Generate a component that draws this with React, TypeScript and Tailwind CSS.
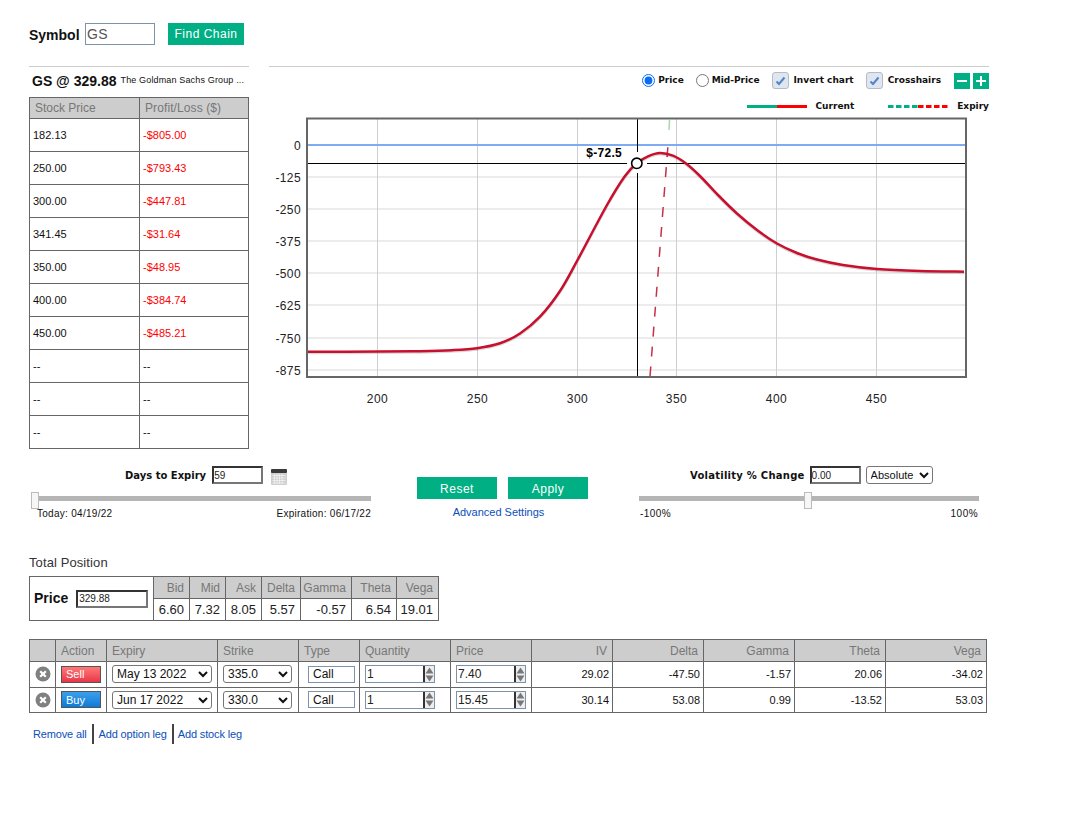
import React from 'react';

const plRows = [
  ['182.13', '-$805.00'],
  ['250.00', '-$793.43'],
  ['300.00', '-$447.81'],
  ['341.45', '-$31.64'],
  ['350.00', '-$48.95'],
  ['400.00', '-$384.74'],
  ['450.00', '-$485.21'],
  ['--', '--'],
  ['--', '--'],
  ['--', '--'],
];

const totals = [
  ['Bid', '6.60'],
  ['Mid', '7.32'],
  ['Ask', '8.05'],
  ['Delta', '5.57'],
  ['Gamma', '-0.57'],
  ['Theta', '6.54'],
  ['Vega', '19.01'],
];

const legs = [
  { action: 'Sell', expiry: 'May 13 2022', strike: '335.0', price: '7.40', iv: '29.02', delta: '-47.50', gamma: '-1.57', theta: '20.06', vega: '-34.02' },
  { action: 'Buy', expiry: 'Jun 17 2022', strike: '330.0', price: '15.45', iv: '30.14', delta: '53.08', gamma: '0.99', theta: '-13.52', vega: '53.03' },
];

const curve: [number, number][] = [
  [308, 351.7], [380, 351.6], [420, 351.2], [452, 350.2], [477, 348.2], [500, 343.3], [520, 333.5], [540, 316.7], [560, 291], [577, 261],
  [607, 205], [625, 176], [637, 163], [648, 156.3], [660, 153], [673, 155.7], [686, 163.5], [700, 176], [718, 195], [737, 213.5], [757, 230], [777, 243.5], [797, 253],
  [817, 259.5], [843, 265], [877, 269], [920, 271], [964, 271.7],
];

// catmull-rom -> bezier
function smoothPath(pts: [number, number][]) {
  let d = `M${pts[0][0]} ${pts[0][1]}`;
  for (let i = 0; i < pts.length - 1; i++) {
    const p0 = pts[Math.max(i - 1, 0)];
    const p1 = pts[i];
    const p2 = pts[i + 1];
    const p3 = pts[Math.min(i + 2, pts.length - 1)];
    const c1x = p1[0] + (p2[0] - p0[0]) / 6;
    const c1y = p1[1] + (p2[1] - p0[1]) / 6;
    const c2x = p2[0] - (p3[0] - p1[0]) / 6;
    const c2y = p2[1] - (p3[1] - p1[1]) / 6;
    d += ` C${c1x} ${c1y} ${c2x} ${c2y} ${p2[0]} ${p2[1]}`;
  }
  return d;
}

function Chart() {
  const yTicks = [
    ['0', 145], ['-125', 177], ['-250', 209], ['-375', 241], ['-500', 273], ['-625', 305], ['-750', 338], ['-875', 370],
  ] as const;
  const xTicks = [['200', 377.5], ['250', 477.5], ['300', 577.5], ['350', 676.5], ['400', 776.5], ['450', 876.5]] as const;
  const path = smoothPath(curve);

  return (
    <svg width="720" height="300" viewBox="269 112 720 300" className="block">
      {yTicks.slice(1).map(([, y]) => (
        <line key={y} x1="308" x2="965" y1={y} y2={y} stroke="#ececec" strokeWidth="2" />
      ))}
      {xTicks.map(([, x]) => (
        <line key={x} x1={x} x2={x} y1="119" y2="377" stroke="#cfcfcf" strokeWidth="1" />
      ))}
      <line x1="308" x2="965" y1="145" y2="145" stroke="#7fabf2" strokeWidth="2" />
      <line x1="308" x2="627" y1="163.5" y2="163.5" stroke="#000" />
      <line x1="647" x2="966" y1="163.5" y2="163.5" stroke="#000" />
      <line x1="637.5" x2="637.5" y1="119" y2="152" stroke="#000" />
      <line x1="637.5" x2="637.5" y1="173" y2="377" stroke="#000" />
      <line x1="669.5" x2="669" y1="120" y2="130" stroke="#a8d8a8" strokeWidth="1.5" />
      <line x1="650" x2="668" y1="376.5" y2="145" stroke="#c5304a" strokeWidth="1.5" strokeDasharray="10 10" />
      <path d={path} fill="none" stroke="#000" strokeOpacity="0.15" strokeWidth="3" transform="translate(0 1)" />
      <path d={path} fill="none" stroke="#c8102e" strokeWidth="2.5" />
      <circle cx="636.8" cy="163.3" r="5.2" fill="#fff" stroke="#000" strokeWidth="1.6" />
      <rect x="307" y="118.5" width="659" height="258.5" fill="none" stroke="#666" strokeWidth="2" />
      <text x="622" y="157" textAnchor="end" fontSize="12" fontWeight="700" fill="#000" letterSpacing="0.3">$-72.5</text>
      {yTicks.map(([label, y]) => (
        <text key={label} x="301" y={y + 4.5} textAnchor="end" fontSize="12" fill="#222" letterSpacing="0.4">{label}</text>
      ))}
      {xTicks.map(([label, x]) => (
        <text key={label} x={x} y="403" textAnchor="middle" fontSize="12" fill="#222" letterSpacing="0.5">{label}</text>
      ))}
    </svg>
  );
}

function CheckBox() {
  return (
    <span className="flex h-[17px] w-[17px] items-center justify-center rounded-[3px] border border-[#b4bcc8] bg-[#dfe6ef]">
      <svg width="11" height="10" viewBox="0 0 11 10">
        <path d="M1.5 5.5 L4 8 L9.5 1.5" fill="none" stroke="#4f86c6" strokeWidth="2" />
      </svg>
    </span>
  );
}

function Spinner() {
  return (
    <span className="flex h-full w-[11px] shrink-0 flex-col items-center justify-center gap-[1px] border-l-2 border-[#333] bg-[#eee]">
      <svg width="9" height="7" viewBox="0 0 9 7"><path d="M4.5 0.5 L8.5 6.5 H0.5 Z" fill="#777" /></svg>
      <svg width="9" height="7" viewBox="0 0 9 7"><path d="M4.5 6.5 L8.5 0.5 H0.5 Z" fill="#777" /></svg>
    </span>
  );
}

function NumberBox({ value }: { value: string }) {
  return (
    <div className="flex h-[18px] w-[70px] border border-[#7b93ab] bg-white">
      <input defaultValue={value} className="w-0 min-w-0 flex-1 pl-[1px] text-[12px] text-[#222] outline-none" />
      <Spinner />
    </div>
  );
}

function Slider({ handleClass }: { handleClass: string }) {
  return (
    <div className="relative flex h-[17px] items-start pt-[4px]">
      <div className="h-[5px] flex-1 bg-[#b5b5b5]" />
      <div className={`absolute top-0 h-[17px] w-[8px] border border-[#bbb] bg-[#f6f6f6] ${handleClass}`} />
    </div>
  );
}

function Calendar() {
  return (
    <svg width="16" height="16" viewBox="0 0 16 16" className="ml-[8px] mt-[4px]">
      <rect x="0" y="0" width="16" height="16" rx="1" fill="#cfcfcf" />
      <rect x="0" y="0" width="16" height="4" rx="1" fill="#3a3a3a" />
      <path d="M1.5 6.5H14.5M1.5 9H14.5M1.5 11.5H14.5M1.5 14H14.5M3.5 5V15M6 5V15M8.5 5V15M11 5V15" stroke="#f5f5f5" strokeWidth="0.7" />
    </svg>
  );
}

function RemoveIcon() {
  return (
    <svg width="16" height="16" viewBox="0 0 16 16" className="mx-auto block">
      <circle cx="8" cy="8" r="7.5" fill="#808080" />
      <path d="M5.2 5.2 L10.8 10.8 M10.8 5.2 L5.2 10.8" stroke="#fff" strokeWidth="2.2" />
    </svg>
  );
}

const labelClass = "font-['DejaVu_Sans',sans-serif] text-[10px] font-bold text-[#111]";
const topLabelClass = "font-['DejaVu_Sans',sans-serif] text-[9px] font-bold text-[#111]";
const insetInput = 'h-[18px] w-[51px] border-2 border-t-[#333] border-l-[#333] border-r-[#767676] border-b-[#767676] text-[10px] text-[#222] outline-none';
const selectClass = 'h-[18px] rounded-[3px] border border-[#767676] bg-white text-[#111] outline-none';
const th = 'border border-[#666] bg-[#cdcdcd] font-normal text-[#777]';

export default function App() {
  return (
    <div className="min-h-[817px] w-[1068px] bg-white pl-[29px] pt-[23px] font-['Liberation_Sans',Arial,sans-serif] text-[#111]">
      {/* Symbol */}
      <div className="flex h-[22px] items-center">
        <span className="w-[56px] pt-[2px] text-[14px] font-bold">Symbol</span>
        <input defaultValue="GS" className="h-[22px] w-[70px] border border-[#7b93ab] pl-[1px] text-[14px] tracking-[0.4px] text-[#555] outline-none" />
        <button className="ml-[13px] h-[22px] w-[76px] bg-[#00b084] text-[12px] tracking-[0.5px] text-white">Find Chain</button>
      </div>

      <div className="mt-[21px] flex h-[383px]">
        {/* Profit / loss table */}
        <div className="w-[220px]">
          <div className="border-t border-[#ccc]" />
          <div className="mb-[2px] flex h-[28px] items-center whitespace-nowrap pl-[3px]">
            <span className="text-[14px] font-bold">GS @ 329.88</span>
            <span className="ml-[4px] text-[9px] tracking-[0.15px]">The Goldman Sachs Group ...</span>
          </div>
          <table className="w-[219px] table-fixed border-collapse border border-[#666] text-[11px]">
            <colgroup>
              <col className="w-[110px]" />
              <col className="w-[109px]" />
            </colgroup>
            <thead>
              <tr className="h-[21px]">
                <th className={`${th} pl-[5px] text-left text-[12px]`}>Stock Price</th>
                <th className={`${th} pl-[5px] text-left text-[12px] tracking-[0.1px]`}>Profit/Loss ($)</th>
              </tr>
            </thead>
            <tbody>
              {plRows.map((r, i) => (
                <tr key={i} className="h-[33px]">
                  <td className="border border-[#666] pl-[3px]">{r[0]}</td>
                  <td className={`border border-[#666] pl-[3px] ${r[1] === '--' ? '' : 'text-[#f00]'}`}>{r[1]}</td>
                </tr>
              ))}
            </tbody>
          </table>
        </div>

        {/* Chart side */}
        <div className="ml-[20px] w-[720px]">
          <div className="border-t border-[#ccc]" />
          <div className={`flex h-[27px] items-center justify-end ${topLabelClass}`}>
            <input type="radio" name="price" defaultChecked className="h-[13px] w-[13px] accent-[#0a6cf5]" />
            <span className="ml-[3px]">Price</span>
            <input type="radio" name="price" className="ml-[12px] h-[13px] w-[13px]" />
            <span className="ml-[3px]">Mid-Price</span>
            <span className="ml-[12px]"><CheckBox /></span>
            <span className="ml-[5px]">Invert chart</span>
            <span className="ml-[12px]"><CheckBox /></span>
            <span className="ml-[5px]">Crosshairs</span>
            <span className="ml-[13px] flex h-[16px] w-[16px] items-center justify-center bg-[#00b084]"><span className="h-[2px] w-[10px] bg-white" /></span>
            <span className="relative ml-[3px] flex h-[16px] w-[16px] items-center justify-center bg-[#00b084]">
              <span className="h-[2px] w-[10px] bg-white" />
              <span className="absolute h-[10px] w-[2px] bg-white" />
            </span>
          </div>
          <div className={`flex h-[18px] items-center justify-end pt-[7px] ${topLabelClass}`}>
            <svg width="60" height="3" className="block"><path d="M0 1.5H30" stroke="#00b084" strokeWidth="3" /><path d="M30 1.5H60" stroke="#f00" strokeWidth="3" /></svg>
            <span className="ml-[9px]">Current</span>
            <svg width="60" height="3" className="ml-[34px] block"><path d="M0 1.5H30" stroke="#00b084" strokeWidth="3" strokeDasharray="5.5 2.5" /><path d="M30 1.5H60" stroke="#f00" strokeWidth="3" strokeDasharray="5.5 2.5" /></svg>
            <span className="ml-[9px]">Expiry</span>
          </div>
          <Chart />
        </div>
      </div>

      {/* Scenario controls */}
      <div className="mt-[17px] flex h-[54px]">
        <div className="ml-[2px] w-[340px]">
          <div className="flex h-[18px] items-center pl-[94px]">
            <span className={`pt-[1px] ${labelClass}`}>Days to Expiry</span>
            <input defaultValue="59" className={`ml-[6px] ${insetInput}`} />
            <Calendar />
          </div>
          <div className="mt-[8px] pl-[4px]">
            <Slider handleClass="-left-[4px]" />
          </div>
          <div className="-mt-[2px] flex h-[12px] items-center justify-between pl-[6px] text-[10px] tracking-[0.28px]">
            <span>Today: 04/19/22</span>
            <span>Expiration: 06/17/22</span>
          </div>
        </div>

        <div className="ml-[46px] w-[171px] pt-[11px]">
          <div className="flex gap-[11px]">
            <button className="h-[22px] w-[80px] bg-[#00b084] pt-[1px] text-[12px] tracking-[0.5px] text-white">Reset</button>
            <button className="h-[22px] w-[80px] bg-[#00b084] pt-[1px] text-[12px] tracking-[0.5px] text-white">Apply</button>
          </div>
          <div className="mt-[6px] flex h-[14px] items-center justify-center pr-[8px] text-[11px] text-[#0b4fb8]">Advanced Settings</div>
        </div>

        <div className="ml-[51px] w-[340px]">
          <div className="flex h-[18px] items-center pl-[51px]">
            <span className={`pt-[1px] tracking-[0.25px] ${labelClass}`}>Volatility % Change</span>
            <input defaultValue="0.00" className={`ml-[5px] ${insetInput}`} />
            <select defaultValue="Absolute" className={`ml-[5px] w-[67px] text-[11px] ${selectClass}`}>
              <option>Absolute</option>
            </select>
          </div>
          <div className="mt-[8px]">
            <Slider handleClass="left-[165px]" />
          </div>
          <div className="-mt-[2px] flex h-[12px] items-center justify-between px-[1px] text-[10px] tracking-[0.45px]">
            <span>-100%</span>
            <span>100%</span>
          </div>
        </div>
      </div>

      {/* Total position */}
      <div className="mt-[33px] flex h-[20px] items-center text-[13px] tracking-[0.1px] text-[#333]">Total Position</div>
      <table className="mt-[3px] w-[409px] table-fixed border-collapse">
        <colgroup>
          <col className="w-[124px]" />
          <col className="w-[36px]" />
          <col className="w-[36px]" />
          <col className="w-[36px]" />
          <col className="w-[39px]" />
          <col className="w-[51px]" />
          <col className="w-[45px]" />
          <col className="w-[42px]" />
        </colgroup>
        <tbody>
          <tr className="h-[22px]">
            <td rowSpan={2} className="border border-[#666] pl-[4px]">
              <div className="flex items-center">
                <span className="text-[14px] font-bold">Price</span>
                <input defaultValue="329.88" className="ml-[8px] h-[18px] w-[72px] border-2 border-t-[#333] border-l-[#333] border-r-[#767676] border-b-[#767676] pl-[1px] text-[10px] text-[#222] outline-none" />
              </div>
            </td>
            {totals.map(([k]) => (
              <td key={k} className={`${th} pr-[5px] text-right text-[12px]`}>{k}</td>
            ))}
          </tr>
          <tr className="h-[22px]">
            {totals.map(([k, v]) => (
              <td key={k} className="border border-[#666] pr-[5px] text-right text-[13px] text-[#222]">{v}</td>
            ))}
          </tr>
        </tbody>
      </table>

      {/* Legs */}
      <table className="mt-[18px] w-[957px] table-fixed border-collapse">
        <colgroup>
          <col className="w-[26px]" />
          <col className="w-[51px]" />
          <col className="w-[111px]" />
          <col className="w-[81px]" />
          <col className="w-[61px]" />
          <col className="w-[91px]" />
          <col className="w-[81px]" />
          <col className="w-[81px]" />
          <col className="w-[91px]" />
          <col className="w-[91px]" />
          <col className="w-[91px]" />
          <col className="w-[101px]" />
        </colgroup>
        <thead>
          <tr className="h-[22px] text-[12px]">
            <th className={th} />
            <th className={`${th} pl-[5px] pt-[1px] text-left`}>Action</th>
            <th className={`${th} pl-[5px] pt-[1px] text-left`}>Expiry</th>
            <th className={`${th} pl-[5px] pt-[1px] text-left`}>Strike</th>
            <th className={`${th} pl-[5px] pt-[1px] text-left`}>Type</th>
            <th className={`${th} pl-[5px] pt-[1px] text-left`}>Quantity</th>
            <th className={`${th} pl-[5px] pt-[1px] text-left`}>Price</th>
            <th className={`${th} pr-[5px] pt-[1px] text-right`}>IV</th>
            <th className={`${th} pr-[5px] pt-[1px] text-right`}>Delta</th>
            <th className={`${th} pr-[5px] pt-[1px] text-right`}>Gamma</th>
            <th className={`${th} pr-[5px] pt-[1px] text-right`}>Theta</th>
            <th className={`${th} pr-[5px] pt-[1px] text-right`}>Vega</th>
          </tr>
        </thead>
        <tbody>
          {legs.map((leg) => (
            <tr key={leg.action} className="h-[25.5px] text-[11px]">
              <td className="border border-[#666]"><RemoveIcon /></td>
              <td className="border border-[#666] pl-[5px]">
                <div
                  className={`flex h-[17px] w-[40px] items-center border border-[#555] pl-[4px] text-[11px] text-white ${
                    leg.action === 'Sell' ? 'bg-linear-to-b from-[#f77] to-[#e8344a]' : 'bg-linear-to-b from-[#3aa0ea] to-[#0a7ad8]'
                  }`}
                >
                  {leg.action}
                </div>
              </td>
              <td className="border border-[#666] pl-[5px]">
                <select defaultValue={leg.expiry} className={`w-[100px] text-[12px] ${selectClass}`}>
                  <option>{leg.expiry}</option>
                </select>
              </td>
              <td className="border border-[#666] pl-[5px]">
                <select defaultValue={leg.strike} className={`w-[69px] text-[12px] ${selectClass}`}>
                  <option>{leg.strike}</option>
                </select>
              </td>
              <td className="border border-[#666] pl-[9px]">
                <div className="flex h-[17px] w-[47px] items-center border border-[#7b93ab] pl-[4px] text-[12px]">Call</div>
              </td>
              <td className="border border-[#666] pl-[5px]"><NumberBox value="1" /></td>
              <td className="border border-[#666] pl-[5px]"><NumberBox value={leg.price} /></td>
              <td className="border border-[#666] pr-[3px] text-right">{leg.iv}</td>
              <td className="border border-[#666] pr-[3px] text-right">{leg.delta}</td>
              <td className="border border-[#666] pr-[3px] text-right">{leg.gamma}</td>
              <td className="border border-[#666] pr-[3px] text-right">{leg.theta}</td>
              <td className="border border-[#666] pr-[3px] text-right">{leg.vega}</td>
            </tr>
          ))}
        </tbody>
      </table>

      <div className="mt-[11px] flex h-[20px] items-center pl-[4px] text-[11px] tracking-[-0.15px] text-[#0b4fb8]">
        <span>Remove all</span>
        <span className="ml-[5px] h-[20px] w-[2px] bg-[#444]" />
        <span className="ml-[5px]">Add option leg</span>
        <span className="ml-[5px] h-[20px] w-[2px] bg-[#444]" />
        <span className="ml-[4px]">Add stock leg</span>
      </div>
    </div>
  );
}
